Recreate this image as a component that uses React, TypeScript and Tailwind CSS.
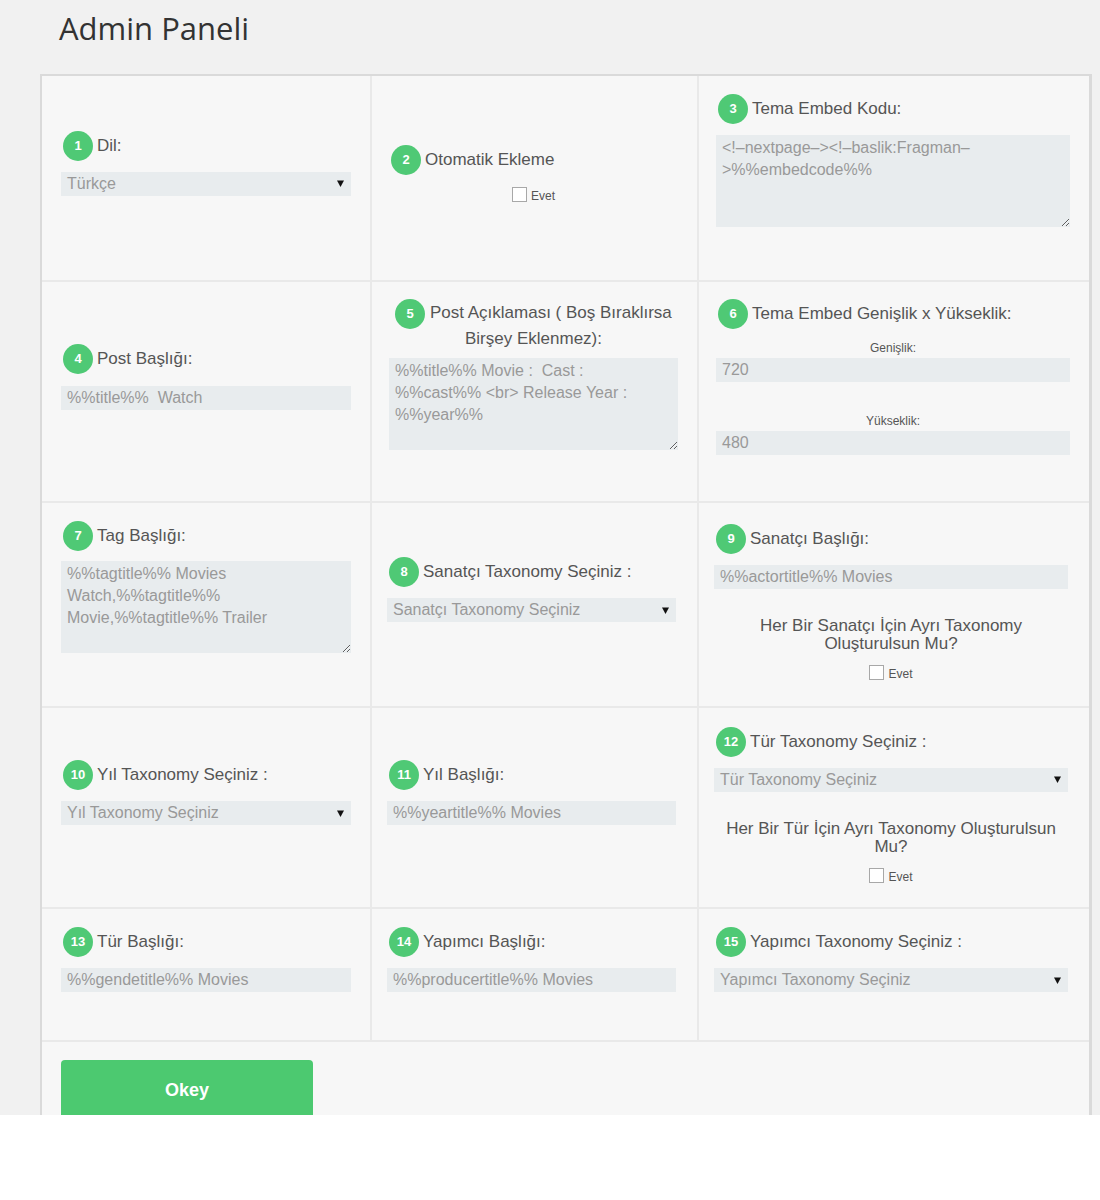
import type { ReactNode } from "react";

const sans = { fontFamily: '"Liberation Sans", Arial, sans-serif' };

function Badge({ n, className = "" }: { n: number; className?: string }) {
  return (
    <span
      className={`inline-flex h-[30px] w-[30px] shrink-0 items-center justify-center rounded-full bg-[#4fc975] align-middle text-[13px] font-bold text-white ${className}`}
    >
      {n}
    </span>
  );
}

function Label({ n, children }: { n: number; children: ReactNode }) {
  return (
    <div className="flex h-[30px] items-center gap-[4px] text-[17px] text-[#555]">
      <Badge n={n} className="ml-[2px]" />
      <span>{children}</span>
    </div>
  );
}

function Field({ value, className = "" }: { value: string; className?: string }) {
  return (
    <div
      className={`h-[24px] w-full whitespace-pre bg-[#e8ecee] pl-[6px] text-[16px] leading-[24px] text-[#999] ${className}`}
    >
      {value}
    </div>
  );
}

function Select({ value, className = "" }: { value: string; className?: string }) {
  return (
    <div
      className={`flex h-[24px] w-full items-center justify-between bg-[#e8ecee] pl-[6px] pr-[7px] text-[16px] text-[#999] ${className}`}
    >
      <span>{value}</span>
      <svg width="7" height="7" viewBox="0 0 7 7">
        <path d="M0 0.5h7L3.5 7z" fill="#111" />
      </svg>
    </div>
  );
}

function Area({ value, className = "" }: { value: string; className?: string }) {
  return (
    <textarea
      readOnly
      defaultValue={value}
      className={`block h-[92px] w-full border-0 bg-[#e8ecee] px-[6px] py-[2px] text-[16px] leading-[22px] text-[#999] outline-none ${className}`}
      style={sans}
    />
  );
}

function Check() {
  return (
    <div className="flex items-end justify-center gap-[4px]">
      <span className="h-[15px] w-[15px] border border-[#a8a8a8] bg-white" />
      <span className="text-[12px] leading-[12px] text-[#555]">Evet</span>
    </div>
  );
}

// pad: "a" = 19/19, "b" = 17/19, "c" = 15/21 (lower rows sit 2px further left)
function Cell({ children, pad = "a" }: { children: ReactNode; pad?: "a" | "b" | "c" }) {
  const p = pad === "a" ? "pl-[19px] pr-[19px]" : pad === "b" ? "pl-[17px] pr-[19px]" : "pl-[15px] pr-[21px]";
  return <div className={`flex flex-col justify-center bg-[#f7f7f7] ${p}`}>{children}</div>;
}

export default function App() {
  return (
    <div className="h-[1115px] overflow-hidden bg-[#f1f1f1]" style={sans}>
      <div className="flex h-[74px] items-start pl-[59px]">
        <h1
          className="mt-[8px] text-[31px] leading-[40px] text-[#333]"
          style={{ fontFamily: '"Open Sans", sans-serif' }}
        >
          Admin Paneli
        </h1>
      </div>

      <div className="ml-[40px] w-[1052px] border-2 border-r-[3px] border-[#dadada] bg-[#e9e9e9]">
        <div className="grid grid-cols-[328px_325px_1fr] grid-rows-[204px_219px_203px_199px_131px] gap-[2px]">
          {/* 1 */}
          <Cell>
            <Label n={1}>Dil:</Label>
            <Select value="Türkçe" className="mb-[30px] mt-[11px]" />
          </Cell>
          {/* 2 */}
          <Cell pad="b">
            <Label n={2}>Otomatik Ekleme</Label>
            <div className="mb-[10px] mt-[12px]">
              <Check />
            </div>
          </Cell>
          {/* 3 */}
          <Cell pad="b">
            <Label n={3}>Tema Embed Kodu:</Label>
            <Area
              value={"<!–nextpage–><!–baslik:Fragman–\n>%%embedcode%%"}
              className="mb-[36px] mt-[11px]"
            />
          </Cell>

          {/* 4 */}
          <Cell>
            <Label n={4}>Post Başlığı:</Label>
            <Field value="%%title%%  Watch" className="mb-[30px] mt-[12px]" />
          </Cell>
          {/* 5 */}
          <Cell pad="b">
            <div className="text-center text-[17px] leading-[20px] text-[#555]">
              <Badge n={5} /> Post Açıklaması ( Boş Bıraklırsa Birşey Eklenmez):
            </div>
            <Area
              value={"%%title%% Movie :  Cast :\n%%cast%% <br> Release Year :\n%%year%%"}
              className="mb-[34px] mt-[9px]"
            />
          </Cell>
          {/* 6 */}
          <Cell pad="b">
            <Label n={6}>Tema Embed Genişlik x Yükseklik:</Label>
            <div className="mt-[12px] text-center text-[12px] leading-[15px] text-[#555]">Genişlik:</div>
            <Field value="720" className="mt-[2px] h-[23px] leading-[23px]" />
            <div className="mt-[32px] text-center text-[12px] leading-[15px] text-[#555]">Yükseklik:</div>
            <Field value="480" className="mb-[30px] mt-[2px] h-[23px] leading-[23px]" />
          </Cell>

          {/* 7 */}
          <Cell>
            <Label n={7}>Tag Başlığı:</Label>
            <Area
              value={"%%tagtitle%% Movies\nWatch,%%tagtitle%%\nMovie,%%tagtitle%% Trailer"}
              className="mb-[36px] mt-[10px]"
            />
          </Cell>
          {/* 8 */}
          <Cell pad="c">
            <Label n={8}>Sanatçı Taxonomy Seçiniz :</Label>
            <Select value="Sanatçı Taxonomy Seçiniz" className="mb-[30px] mt-[11px]" />
          </Cell>
          {/* 9 */}
          <Cell pad="c">
            <Label n={9}>Sanatçı Başlığı:</Label>
            <Field value="%%actortitle%% Movies" className="mt-[11px]" />
            <div className="mt-[28px] text-center text-[17px] leading-[18px] text-[#555]">
              Her Bir Sanatçı İçin Ayrı Taxonomy Oluşturulsun Mu?
            </div>
            <div className="mb-[6px] mt-[12px]">
              <Check />
            </div>
          </Cell>

          {/* 10 */}
          <Cell>
            <Label n={10}>Yıl Taxonomy Seçiniz :</Label>
            <Select value="Yıl Taxonomy Seçiniz" className="mb-[30px] mt-[11px]" />
          </Cell>
          {/* 11 */}
          <Cell pad="c">
            <Label n={11}>Yıl Başlığı:</Label>
            <Field value="%%yeartitle%% Movies" className="mb-[30px] mt-[11px]" />
          </Cell>
          {/* 12 */}
          <Cell pad="c">
            <Label n={12}>Tür Taxonomy Seçiniz :</Label>
            <Select value="Tür Taxonomy Seçiniz" className="mt-[11px]" />
            <div className="mt-[28px] text-center text-[17px] leading-[18px] text-[#555]">
              Her Bir Tür İçin Ayrı Taxonomy Oluşturulsun Mu?
            </div>
            <div className="mb-[6px] mt-[12px]">
              <Check />
            </div>
          </Cell>

          {/* 13 */}
          <Cell>
            <Label n={13}>Tür Başlığı:</Label>
            <Field value="%%gendetitle%% Movies" className="mb-[30px] mt-[11px]" />
          </Cell>
          {/* 14 */}
          <Cell pad="c">
            <Label n={14}>Yapımcı Başlığı:</Label>
            <Field value="%%producertitle%% Movies" className="mb-[30px] mt-[11px]" />
          </Cell>
          {/* 15 */}
          <Cell pad="c">
            <Label n={15}>Yapımcı Taxonomy Seçiniz :</Label>
            <Select value="Yapımcı Taxonomy Seçiniz" className="mb-[30px] mt-[11px]" />
          </Cell>
        </div>

        <div className="mt-[2px] bg-[#f7f7f7] pb-[40px] pl-[19px] pt-[18px]">
          <button className="h-[60px] w-[252px] rounded-[4px] bg-[#4cc970] text-[18px] font-bold text-white">
            Okey
          </button>
        </div>
      </div>
    </div>
  );
}
